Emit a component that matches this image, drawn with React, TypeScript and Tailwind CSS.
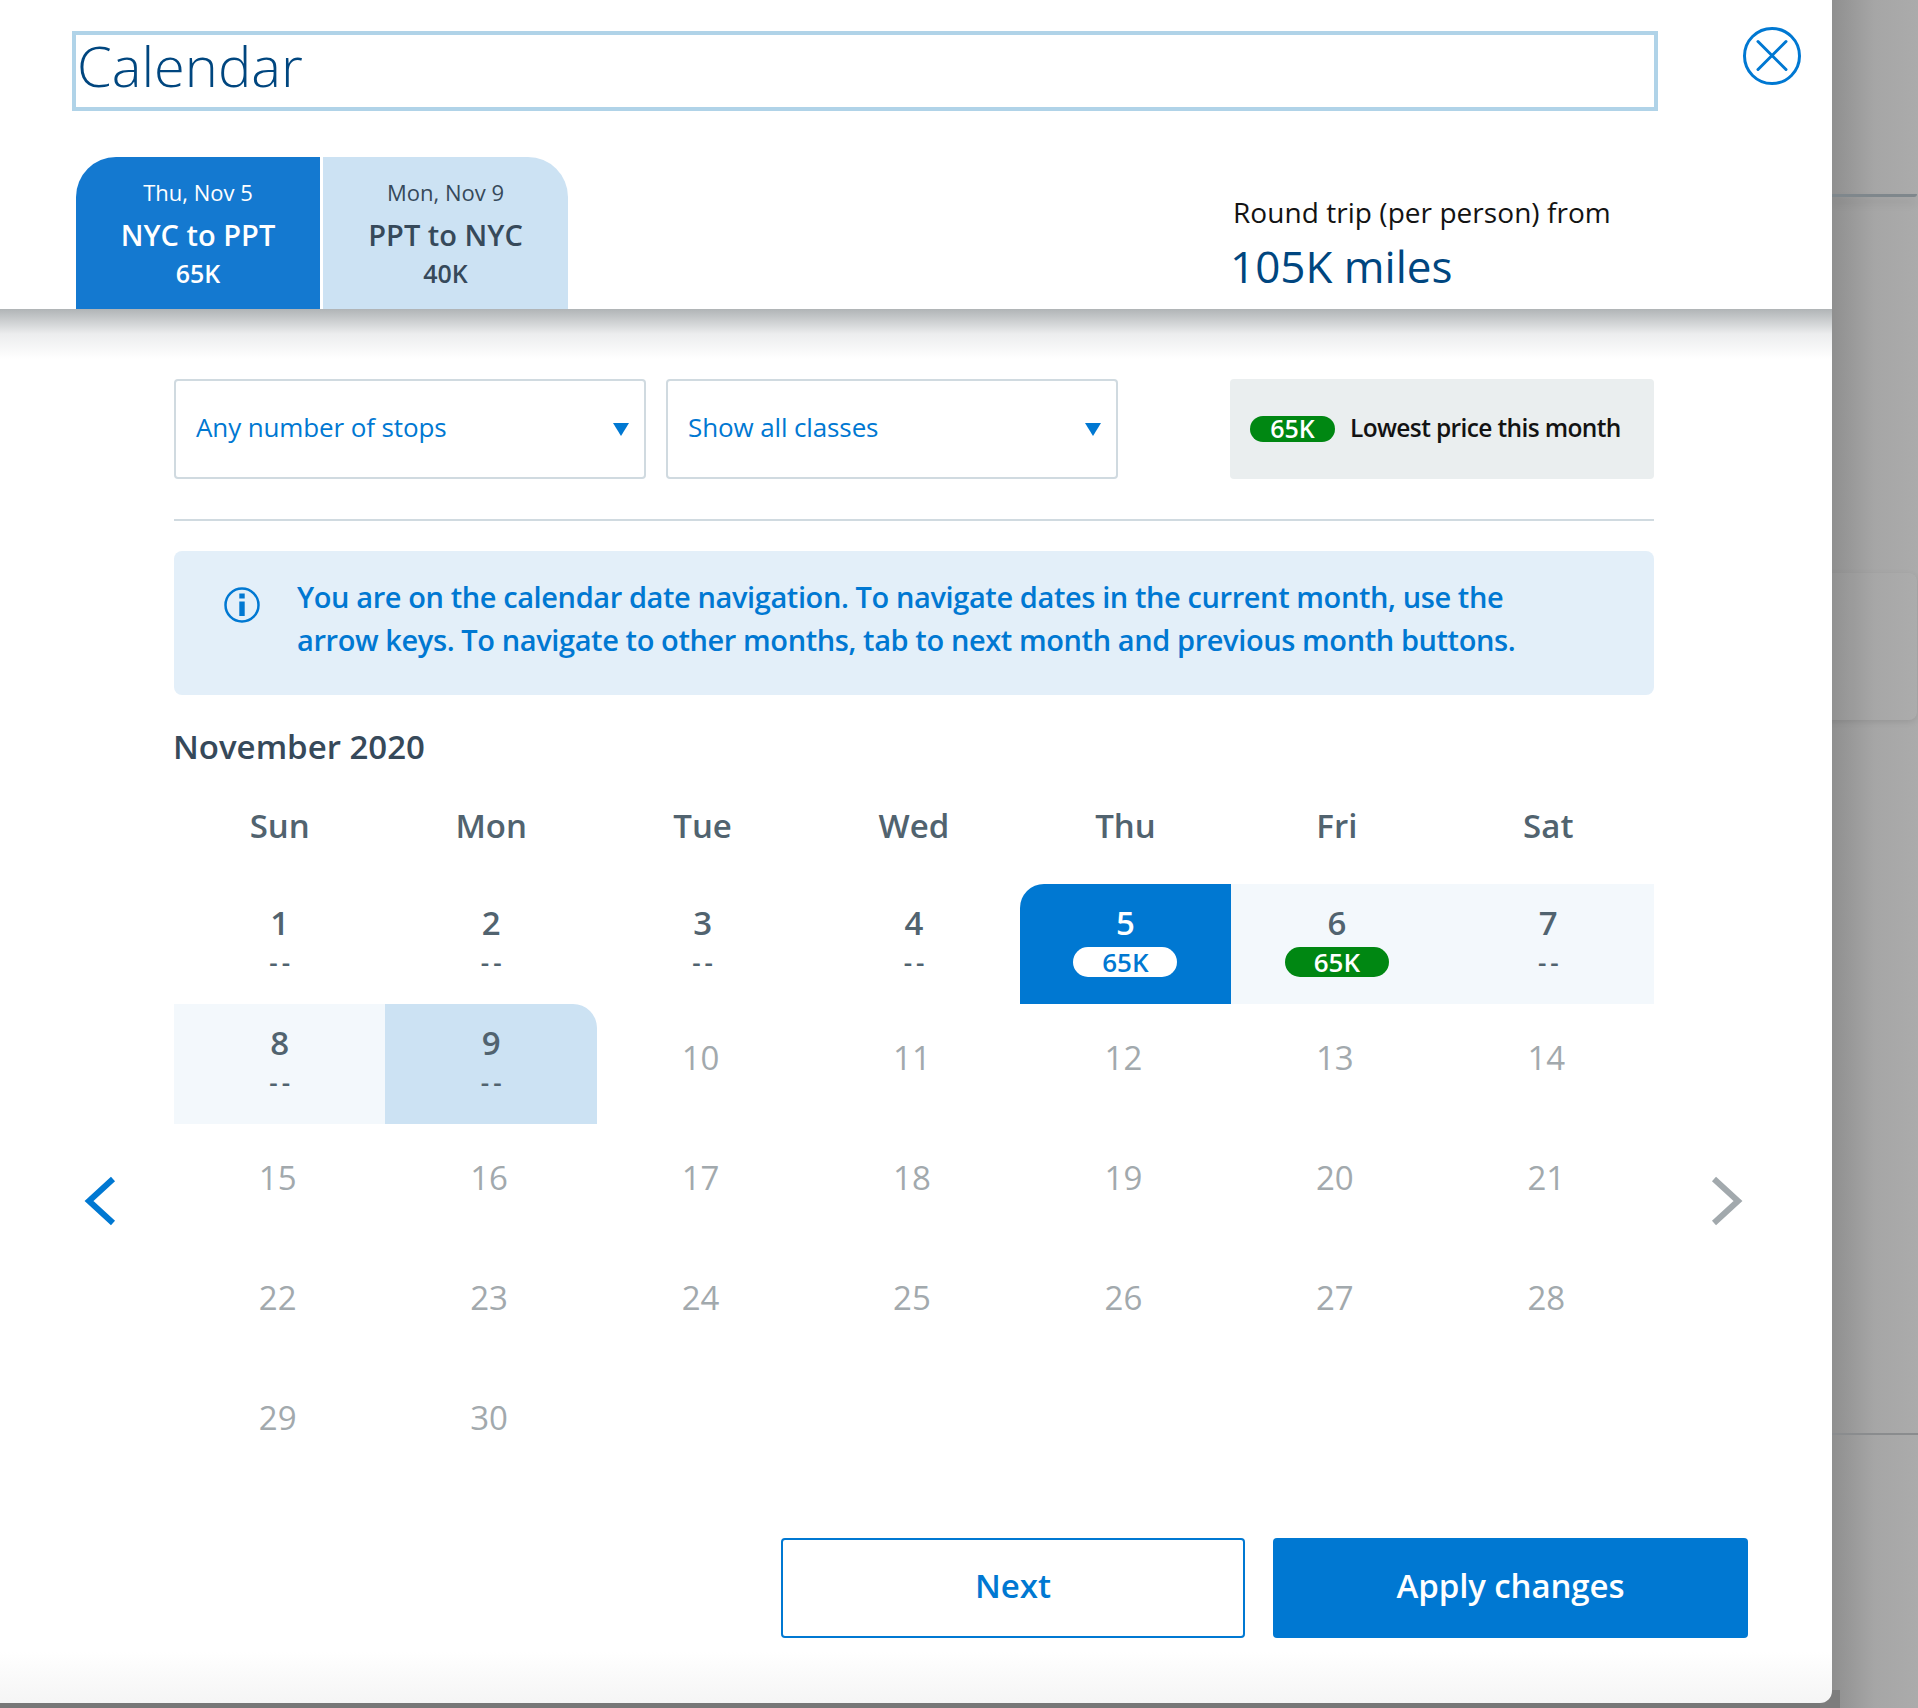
import React from "react";

const F = "font-['Open_Sans','Noto_Sans',sans-serif]";

function Day({ n, state, price, muted }: { n: number; state?: string; price?: string; muted?: boolean }) {
  if (muted) {
    return (
      <div className="h-[120px] flex justify-center pt-[32px] pr-[4px]">
        <span className="text-[33px] leading-[44px] text-[#a2a9ad] font-medium">{n}</span>
      </div>
    );
  }
  const bg =
    state === "start"
      ? "bg-[#0078d2] text-white rounded-tl-[24px]"
      : state === "end"
        ? "bg-[#cce2f3] text-[#51636f] rounded-tr-[24px]"
        : state === "range"
          ? "bg-[#f3f8fc] text-[#51636f]"
          : "text-[#51636f]";
  return (
    <div className={`h-[120px] flex flex-col items-center pt-[17px] ${bg}`}>
      <span className="text-[33px] leading-[44px] font-semibold">{n}</span>
      {price ? (
        <span
          className={`mt-[2px] w-[104px] h-[30px] rounded-[15px] flex items-center justify-center text-[26px] leading-[30px] font-semibold ${
            state === "start" ? "bg-white text-[#0078d2]" : "bg-[#008712] text-white"
          }`}
        >
          {price}
        </span>
      ) : (
        <span className="mt-[2px] pl-[4px] h-[30px] text-[26px] leading-[30px] font-semibold text-[#51636f] tracking-[4px]">--</span>
      )}
    </div>
  );
}

function Select({ label, className }: { label: string; className: string }) {
  return (
    <div
      className={`h-[100px] border-2 border-[#d0dae0] rounded-[4px] flex items-center justify-between pl-[20px] pr-[15px] bg-white ${className}`}
    >
      <span className="text-[26px] tracking-[-0.12px] text-[#0078d2] pb-[4px]">{label}</span>
      <svg width="16" height="13" viewBox="0 0 16 13">
        <path d="M0 0H16L8 13Z" fill="#0078d2" />
      </svg>
    </div>
  );
}

export default function App() {
  const weekdays = ["Sun", "Mon", "Tue", "Wed", "Thu", "Fri", "Sat"];
  return (
    <div className={`${F} w-[1918px] h-[1708px] overflow-hidden bg-[#777777] relative`}>
      <div className="absolute top-0 bottom-0 right-0 left-[1832px] bg-gradient-to-r from-[#8f8f8f] via-[#a6a6a6] via-[50%] to-[#ababab]" />
      <div className="absolute top-[194px] left-[1832px] right-[1px] h-[3px] rounded-br-[3px] bg-[#7f878c] shadow-[0_6px_8px_rgba(0,0,0,0.12)]" />
      <div className="absolute top-[573px] left-[1800px] right-[1px] h-[147px] rounded-r-[8px] bg-[#ffffff05] shadow-[0_2px_6px_rgba(0,0,0,0.1)]" />
      <div className="absolute top-[1433px] left-[1832px] right-0 h-[2px] bg-[#8a8c8e]" />
      <div className="absolute top-[1690px] left-[1820px] w-[20px] h-[18px] bg-[#7d7d7d]" />
      <div className="relative w-[1832px] h-[1703px] bg-gradient-to-b from-white from-[97%] to-[#f5f5f5] rounded-br-[12px] flex flex-col">
        <header className="h-[309px] relative bg-white shrink-0">
          <div className="flex items-start pt-[31px] pl-[72px]">
            <div className="w-[1586px] h-[80px] border-[4px] border-[#b0d3e8] flex items-center pl-[1px] pb-[12px]">
              <span className="text-[56px] font-light text-[#00467f] leading-[60px]">Calendar</span>
            </div>
            <svg width="60" height="60" viewBox="0 0 60 60" className="ml-[84px] -mt-[5px]">
              <circle cx="30" cy="30" r="27.5" fill="none" stroke="#0078d2" strokeWidth="3" />
              <path d="M16 15.5L44 43.5M44 15.5L16 43.5" stroke="#0078d2" strokeWidth="3" strokeLinecap="round" fill="none" />
            </svg>
          </div>
          <div className="flex pl-[76px] pt-[46px] justify-between">
            <div className="flex gap-[3px] h-[152px]">
              <div className="w-[244px] rounded-tl-[40px] bg-[#1479d0] text-white flex flex-col items-center pt-[20px]">
                <span className="text-[22px] leading-[30px]">Thu, Nov 5</span>
                <span className="text-[29px] leading-[40px] font-semibold mt-[8px]">NYC to PPT</span>
                <span className="text-[25px] leading-[34px] font-semibold mt-[1px]">65K</span>
              </div>
              <div className="w-[245px] rounded-tr-[40px] bg-[#cce2f3] text-[#36495a] flex flex-col items-center pt-[20px]">
                <span className="text-[22px] leading-[30px]">Mon, Nov 9</span>
                <span className="text-[29px] leading-[40px] font-semibold mt-[8px]">PPT to NYC</span>
                <span className="text-[25px] leading-[34px] font-semibold mt-[1px]">40K</span>
              </div>
            </div>
            <div className="w-[599px] pt-[35px]">
              <div className="text-[28px] leading-[40px] tracking-[0.05px] text-[#131313]">Round trip (per person) from</div>
              <div className="text-[44px] leading-[60px] text-[#00467f] mt-[4px] -ml-[3px]">105K miles</div>
            </div>
          </div>
        </header>
        <div className="h-[50px] -mb-[50px] bg-gradient-to-b from-[#b0b4b6] via-[#ecedee] via-[50%] to-white shrink-0" />
        <main className="pt-[70px] pl-[174px]">
          <div className="flex items-start">
            <Select label="Any number of stops" className="w-[472px]" />
            <Select label="Show all classes" className="w-[452px] ml-[20px]" />
            <div className="ml-[112px] w-[424px] h-[100px] rounded-[4px] bg-[#eaeeef] flex items-center pl-[20px]">
              <span className="w-[85px] h-[26px] rounded-[13px] bg-[#008712] text-white text-[25px] font-semibold flex items-center justify-center">
                65K
              </span>
              <span className="ml-[15px] text-[24.5px] tracking-[-0.63px] pb-[2px] font-semibold text-[#131313]">Lowest price this month</span>
            </div>
          </div>
          <div className="mt-[40px] w-[1480px] h-[2px] bg-[#d0dae0]" />
          <div className="mt-[30px] w-[1480px] h-[144px] rounded-[8px] bg-[#e3eff9] flex items-start pl-[50px] pt-[25px]">
            <svg width="36" height="36" viewBox="0 0 36 36" className="mt-[11px] shrink-0">
              <circle cx="18" cy="18" r="16.5" fill="none" stroke="#0078d2" strokeWidth="2.5" />
              <rect x="15.3" y="6.5" width="5.4" height="5" fill="#0078d2" />
              <rect x="15.3" y="14.5" width="5.4" height="14.5" fill="#0078d2" />
            </svg>
            <p className="ml-[37px] text-[29px] leading-[42.5px] tracking-[-0.4px] font-semibold text-[#0078d2]">
              You are on the calendar date navigation. To navigate dates in the current month, use the
              <br />
              arrow keys. To navigate to other months, tab to next month and previous month buttons.
            </p>
          </div>
          <h2 className="mt-[30px] -ml-[1px] text-[33px] leading-[44px] font-semibold text-[#36495a]">November 2020</h2>
          <div className="mt-[35px] w-[1480px] grid grid-cols-7">
            {weekdays.map((d) => (
              <div key={d} className="text-center text-[33px] leading-[44px] font-semibold text-[#51636f] h-[80px]">
                {d}
              </div>
            ))}
            {[1, 2, 3, 4].map((n) => (
              <Day key={n} n={n} />
            ))}
            <Day n={5} state="start" price="65K" />
            <Day n={6} state="range" price="65K" />
            <Day n={7} state="range" />
            <Day n={8} state="range" />
            <Day n={9} state="end" />
            {Array.from({ length: 21 }, (_, i) => i + 10).map((n) => (
              <Day key={n} n={n} muted />
            ))}
          </div>
          <div className="mt-[54px] flex w-[1574px] justify-end gap-[28px]">
            <button className="w-[464px] h-[100px] rounded-[4px] border-2 border-[#0078d2] bg-white text-[33px] pb-[4px] font-semibold text-[#0078d2]">
              Next
            </button>
            <button className="w-[475px] h-[100px] rounded-[4px] bg-[#0078d2] text-[33px] tracking-[-0.1px] pb-[4px] font-semibold text-white">
              Apply changes
            </button>
          </div>
        </main>
      </div>
      <svg width="34" height="50" viewBox="0 0 34 50" className="absolute left-[83px] top-[1176px]">
        <path d="M30 3L6 25L30 47" fill="none" stroke="#0078d2" strokeWidth="6" />
      </svg>
      <svg width="34" height="50" viewBox="0 0 34 50" className="absolute left-[1710px] top-[1176px]">
        <path d="M4 3L28 25L4 47" fill="none" stroke="#a2a9ad" strokeWidth="6" />
      </svg>
    </div>
  );
}
